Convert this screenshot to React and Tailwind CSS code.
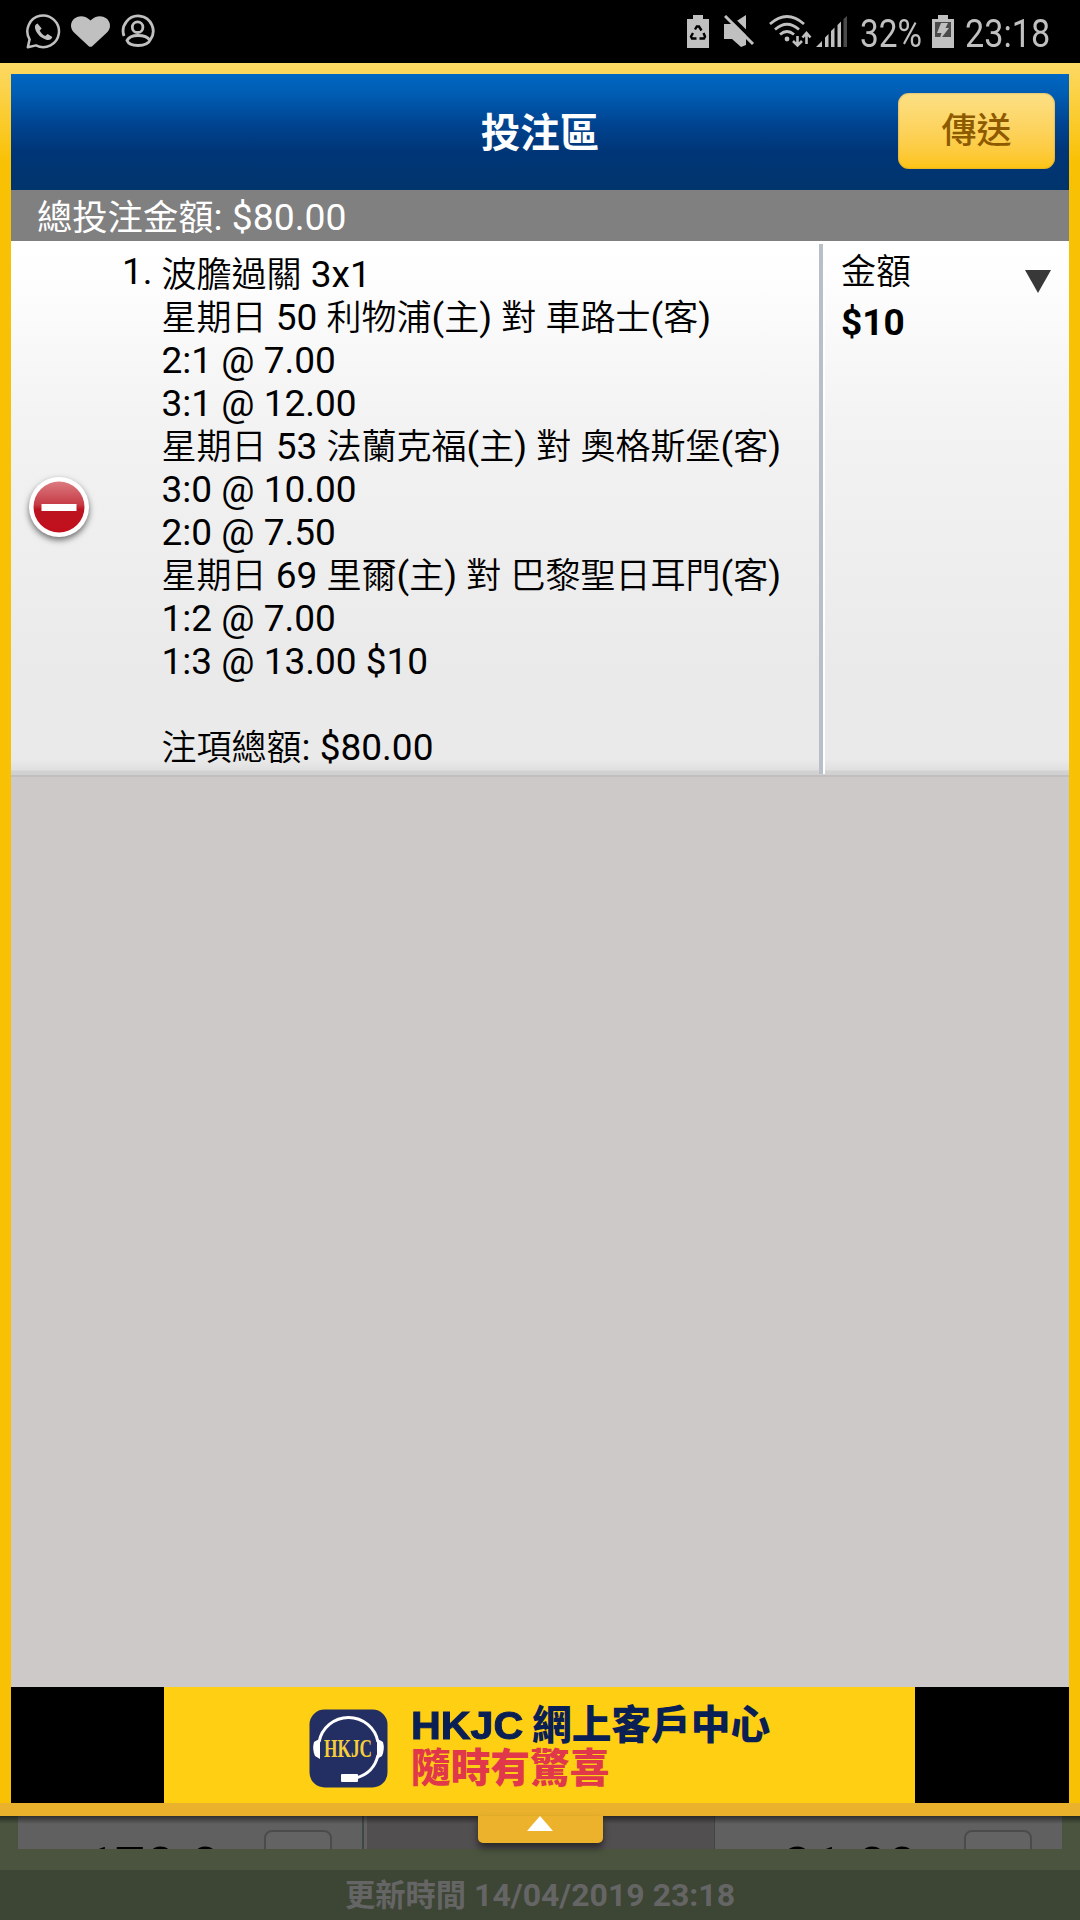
import React from 'react';
import { FaHeart } from 'react-icons/fa';

const FONT = 'font-[Roboto,"Noto_Sans_CJK_TC",sans-serif]';

const LEGS = [
    '波膽過關 3x1',
    '星期日 50 利物浦(主) 對 車路士(客)',
    '2:1 @ 7.00',
    '3:1 @ 12.00',
    '星期日 53 法蘭克福(主) 對 奧格斯堡(客)',
    '3:0 @ 10.00',
    '2:0 @ 7.50',
    '星期日 69 里爾(主) 對 巴黎聖日耳門(客)',
    '1:2 @ 7.00',
    '1:3 @ 13.00 $10',
    '',
    '注項總額: $80.00',
];

// Chinese runs are set slightly smaller and lighter than the latin text
const Mixed = ({ text, weight = 'font-[350]' }) =>
    text.split(/([\u4e00-\u9fff]+)/).map((part, i) =>
        /[\u4e00-\u9fff]/.test(part) ? <span key={i} className={`text-[0.947em] ${weight}`}>{part}</span> : part
    );

const WhatsAppIcon = () => (
    <svg width="36" height="36" viewBox="0 0 36 36" fill="none" stroke="#c0c0c0">
        <path d="M1.800 33.200 L3.600 25.400 A15.800 15.800 0 1 1 10 31.400 Z" strokeWidth="2.5" strokeLinejoin="round" />
        <path d="M11.5 9.5 c-2 .6 -3 2.6 -2.4 5 c1.6 6 6.400 10 12 11.400 c2.600 .4 4.600 -.8 5.200 -3 l-4.600 -3 l-2.400 2.200 c-3 -1.400 -4.600 -3.400 -5.600 -5.600 l2 -2 z" fill="#c0c0c0" stroke="none" />
    </svg>
);

const PersonIcon = () => (
    <svg width="34" height="34" viewBox="0 0 34 34" fill="none" stroke="#c0c0c0" strokeWidth="2.8">
        <path d="M3 22 A15 15 0 1 1 29.500 25.500 Q27 31.500 17 31.500 Q8 31.500 6 26.500 Q8.500 21.500 17 21.500 Q26 21.500 28.600 26" />
        <circle cx="16.600" cy="13.200" r="5.300" />
    </svg>
);

const BatteryRecycleIcon = () => (
    <svg width="22" height="33" viewBox="0 0 22 33">
        <path d="M0 4H6V0H16V4H22V33H0Z" fill="#c0c0c0" />
        <path d="M8 14.500 L9.800 11.500 H12 L14.500 15.500 M16.500 18 L18 21.500 L17 23.500 H12.500 M9.500 23.500 H5 L4 21.500 L6 18" fill="none" stroke="#000" strokeWidth="2.400" />
    </svg>
);

const MuteIcon = () => (
    <svg width="31" height="33" viewBox="0 0 31 33">
        <path d="M0 9H8L22 0V30L17 32L8 24H0Z" fill="#c0c0c0" />
        <path d="M3.500 -1L31 26" stroke="#000" strokeWidth="4" />
        <path d="M1 1L29 29" stroke="#c0c0c0" strokeWidth="3" />
    </svg>
);

const WifiIcon = () => (
    <svg width="44" height="33" viewBox="0 0 44 33" fill="none" stroke="#c0c0c0" strokeWidth="2.800">
        <path d="M1 9 Q18 -6 35 9 M6 14.500 Q18 4 30 14.500 M11 19.500 Q18 13.500 25 19.500" />
        <circle cx="18" cy="24" r="2.400" fill="#c0c0c0" stroke="none" />
        <path d="M28.500 21V30M24 26L28.500 30.500L33 26" strokeWidth="2.600" />
        <path d="M37.500 29V18M33.500 22.500L37.500 18L41.500 22.500" strokeWidth="2.600" />
    </svg>
);

const SignalIcon = () => (
    <svg width="32" height="31" viewBox="0 0 32 31" fill="#c0c0c0">
        <path d="M0 31L6 25V31Z M9 21.500L12.500 18V31H9Z M15 15L18.500 11.500V31H15Z M21.500 9L25 5.500V31H21.500Z" />
        <path d="M27.500 3L31 0V31H27.500Z" fill="#4a4a4a" />
    </svg>
);

const BatteryIcon = () => (
    <svg width="22" height="33" viewBox="0 0 22 33">
        <path d="M0 4H6V0H16V4H22V33H0Z" fill="#c0c0c0" />
        <path d="M3 7H19V22H3Z" fill="#4a4a4a" />
        <path d="M9 8H16L13.500 13H17L7 26L9.500 18H5Z" fill="#c0c0c0" />
    </svg>
);

const StatusBar = () => (
    <div className="flex h-[63px] items-start bg-black text-[#c0c0c0]">
        <div className="flex pt-[14px] pl-[26px]">
            <WhatsAppIcon />
            <FaHeart className="ml-[9px] h-[35px] w-[39px]" preserveAspectRatio="none" />
            <div className="ml-[11px]"><PersonIcon /></div>
        </div>
        <div className="ml-auto flex pr-[31px]">
            <div className="mt-[15px]"><BatteryRecycleIcon /></div>
            <div className="mt-[15px] ml-[15px]"><MuteIcon /></div>
            <div className="mt-[15px] ml-[14px]"><WifiIcon /></div>
            <div className="mt-[16px] ml-[3px]"><SignalIcon /></div>
            <div className="mt-[10px] ml-[12px] w-[63px] text-[38px] leading-[48px]"><span className="inline-block origin-left scale-x-[0.88]">32%</span></div>
            <div className="mt-[15px] ml-[9px]"><BatteryIcon /></div>
            <div className="mt-[10px] ml-[11px] w-[84px] text-[38px] leading-[48px]"><span className="inline-block origin-left scale-x-[0.9]">23:18</span></div>
        </div>
    </div>
);

const Header = () => (
    <div className="grid h-[116px] grid-cols-[1fr_auto_1fr] items-center bg-[linear-gradient(180deg,#0067c3_0%,#005cb2_18%,#004390_44%,#003678_66%,#00346c_100%)]">
        <span />
        <h1 className="pt-[3px] text-[39.500px] leading-[48px] font-bold text-white">投注區</h1>
        <button className="mr-[14px] mb-[2px] h-[76px] w-[157px] justify-self-end rounded-[11px] bg-linear-to-b from-[#fce085] to-[#fdc40a] pt-[2px] text-[35px] font-medium text-[#8e5a00] shadow-[inset_0_0_2px_#a89050]">
            傳送
        </button>
    </div>
);

const RemoveIcon = () => (
    <svg width="72" height="72" viewBox="0 0 72 72" className="drop-shadow-[0_3px_3px_rgba(0,0,0,0.55)]">
        <defs>
            <linearGradient id="red" x1="0" y1="0" x2="0" y2="1">
                <stop offset="0" stopColor="#dc7a80" />
                <stop offset="0.450" stopColor="#c63c46" />
                <stop offset="0.550" stopColor="#bb1420" />
                <stop offset="1" stopColor="#c20f1c" />
            </linearGradient>
        </defs>
        <circle cx="36" cy="36" r="30" fill="#fff" />
        <circle cx="36" cy="36" r="25.500" fill="url(#red)" />
        <rect x="18.500" y="33" width="35" height="7" fill="#fff" />
    </svg>
);

const BetRow = () => (
    <div className="flex h-[536px] border-b-2 border-[#c0bebe] bg-[linear-gradient(180deg,#ffffff_0%,#fdfdfd_8%,#f3f3f3_33%,#eaeaea_80%,#eaeaea_97%,#e0e0e0_99%,#d2d2d2_99.3%,#d0d0d0_100%)] text-[37px] leading-[43px] text-black">
        <div className="flex w-[111px] items-center pb-[3px] pl-[12px]">
            <RemoveIcon />
        </div>
        <div className="w-[39.500px] pt-[9px]">1.</div>
        <div className="flex-1 pt-[12px]">
            {LEGS.map((line, i) => (
                <div key={i} className="h-[43px] whitespace-nowrap"><Mixed text={line} /></div>
            ))}
        </div>
        <div className="mt-[3px] mb-[1px] w-[6px] border-r-2 border-l-4 border-r-white border-l-[#b7c0c7]" />
        <div className="flex w-[244px] justify-between pr-[17px] pl-[16px]">
            <div className="pt-[9px]">
                <div><Mixed text="金額" /></div>
                <div className="mt-[7px] font-bold">$10</div>
            </div>
            <svg width="28" height="24" viewBox="0 0 28 24" className="mt-[28px]">
                <path d="M1 1H27L14 24Z" fill="#383838" />
            </svg>
        </div>
    </div>
);

const Banner = () => (
    <div className="flex h-[116px] bg-black pl-[153px]">
        <div className="flex w-[751px] bg-[#ffcf14] pt-[22px] pl-[145px]">
            <svg width="79" height="79" viewBox="0 0 79 79">
                <rect x="0.500" y="0.500" width="78" height="78" rx="15" fill="#232e63" />
                <path d="M10 33 A30 30 0 0 1 69 33 M69 46 Q65 64 47 69" fill="none" stroke="#fff" strokeWidth="3" />
                <path d="M5 33 Q8 31 11 30 V50 L6 47 Q3 40 5 33Z M74 33 Q71 31 68 30 V50 L73 47 Q76 40 74 33Z" fill="#fff" />
                <rect x="32" y="65" width="17" height="8" rx="1" fill="#fff" />
                <text x="15" y="47.500" fontSize="26" textLength="48" lengthAdjust="spacingAndGlyphs" fill="#f5cf3a" className="font-['Liberation_Serif',serif] font-bold">HKJC</text>
            </svg>
            <div className="-mt-[5px] ml-[23px] text-[39.700px] leading-[43px] font-black">
                <div className="flex whitespace-nowrap text-[#0a2055]">
                    <span className="w-[121px] font-['Liberation_Sans',sans-serif] font-bold"><span className="inline-block origin-left scale-x-[1.04] [-webkit-text-stroke:1px_#0a2055]">HKJC</span></span>
                    <span>網上客戶中心</span>
                </div>
                <div className="text-[#e0384a]">隨時有驚喜</div>
            </div>
        </div>
    </div>
);

const OddsCell = ({ odds }) => (
    <div className="relative h-[33px] overflow-hidden bg-[#606060] text-black">
        <div className="absolute top-[25px] left-[67px] text-[53px] leading-[52px] font-medium">{odds}</div>
        <div className="absolute top-[14px] right-[30px] h-[60px] w-[68px] rounded-[8px] border-2 border-[#4b4b4b] bg-[#636363]" />
    </div>
);

const Footer = () => (
    <div className="relative h-[104px] bg-[#4a543f]">
        <div className="grid grid-cols-[344px_1fr_347px] px-[18px]">
            <OddsCell odds="170.0" />
            <div className="h-[33px] border-r border-l-2 border-[#3f4744] bg-[#606060] pl-[3px]">
                <div className="h-full bg-[#524f51]" />
            </div>
            <OddsCell odds="21.00" />
        </div>
        <div className="mt-[21px] h-[50px] bg-[#3d4535] text-center text-[32px] leading-[50px] font-bold text-[#656565]">
            <Mixed text="更新時間 14/04/2019 23:18" weight="font-bold" />
        </div>
        <div className="absolute inset-x-0 top-0 h-[8px] bg-linear-to-b from-black/50 to-transparent" />
        <div className="absolute top-0 left-[477.500px] flex h-[27px] w-[125px] justify-center rounded-b-[5px] bg-[#edb22c] shadow-[0_5px_7px_rgba(0,0,0,0.5)]">
            <svg width="28" height="16" viewBox="0 0 28 16">
                <path d="M14 0L27 15H1Z" fill="#fff" />
            </svg>
        </div>
    </div>
);

export default function App() {
    return (
        <div className={`h-[1920px] w-[1080px] overflow-hidden bg-black ${FONT}`}>
            <StatusBar />
            <div className="flex h-[1740px] flex-col bg-[linear-gradient(180deg,#fcd966_0px,#fcd450_20px,#f9c104_100px)] px-[11px] pt-[11px]">
                <Header />
                <div className="h-[51px] bg-[#808080] pt-[2px] pl-[26px] text-[37.300px] leading-[51px] text-white"><Mixed text="總投注金額: $80.00" weight="font-normal" /></div>
                <div className="flex-1 bg-[#cdc9c8]">
                    <BetRow />
                </div>
                <Banner />
            </div>
            <div className="h-[13px] bg-[#e9b12c]" />
            <Footer />
        </div>
    );
}
